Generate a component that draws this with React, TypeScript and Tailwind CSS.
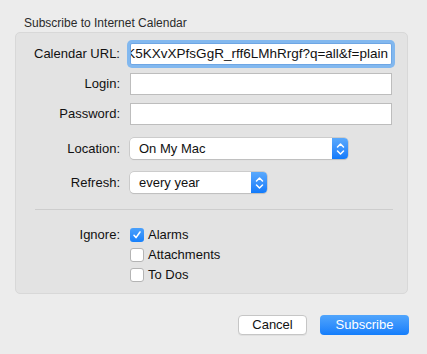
import React from "react";

const font = { fontFamily: '"Liberation Sans", Arial, sans-serif' };

function Stepper() {
  return (
    <svg width="9" height="14" viewBox="0 0 9 14" fill="none">
      <path d="M1.5 5 L4.5 2 L7.5 5" stroke="white" strokeWidth="1.5" strokeLinecap="round" strokeLinejoin="round" />
      <path d="M1.5 9 L4.5 12 L7.5 9" stroke="white" strokeWidth="1.5" strokeLinecap="round" strokeLinejoin="round" />
    </svg>
  );
}

function Popup({ width, text }: { width: string; text: string }) {
  return (
    <div className={`${width} h-[21px] flex rounded-[4px] bg-white shadow-[0_0_0_0.5px_#b5b5b5,0_1px_1px_rgba(0,0,0,0.12)] overflow-hidden`}>
      <div className="flex-1 flex items-center pl-[9px] text-[13px] text-[#111]">{text}</div>
      <div className="w-[16px] h-full flex items-center justify-center bg-gradient-to-b from-[#5aa9fc] to-[#0f7afb]">
        <Stepper />
      </div>
    </div>
  );
}

function Checkbox({ checked, label }: { checked?: boolean; label: string }) {
  return (
    <div className="flex items-center h-[20px]">
      {checked ? (
        <div className="w-[14px] h-[14px] rounded-[3px] bg-gradient-to-b from-[#4aa0fb] to-[#1580fb] flex items-center justify-center">
          <svg width="10" height="10" viewBox="0 0 10 10" fill="none">
            <path d="M2 5.3 L4 7.6 L8 2" stroke="white" strokeWidth="1.6" strokeLinecap="round" strokeLinejoin="round" />
          </svg>
        </div>
      ) : (
        <div className="w-[14px] h-[14px] rounded-[3px] bg-white border border-[#b4b4b4] box-border" />
      )}
      <span className="ml-[4px] text-[13px] text-[#111]">{label}</span>
    </div>
  );
}

function Label({ children }: { children: React.ReactNode }) {
  return <div className="w-[104px] shrink-0 text-right text-[13px] text-[#111]">{children}</div>;
}

export default function App() {
  return (
    <div className="w-[427px] h-[354px] bg-[#ececec] flex flex-col overflow-hidden" style={font}>
      <div className="pt-[16px] pl-[24px] text-[12px] leading-[14px] text-[#2a2a2a]">Subscribe to Internet Calendar</div>
      <div className="mt-[2px] ml-[15px] w-[393px] h-[262px] rounded-[5px] bg-[#e3e3e3] border border-[#d8d8d8] box-border flex flex-col pt-[10px]">
        <div className="flex items-center h-[22px]">
          <Label>Calendar URL:</Label>
          <div className="ml-[10px] w-[262px] h-[22px] bg-white rounded-[2px] border border-[#6ea6e4] shadow-[0_0_0_3px_#82b8ef] flex items-center justify-end overflow-hidden pr-[3px] box-border">
            <span className="whitespace-nowrap text-[13.5px] text-[#111]">K5KXvXPfsGgR_rff6LMhRrgf?q=all&amp;f=plain</span>
          </div>
        </div>
        <div className="flex items-center h-[22px] mt-[8px]">
          <Label>Login:</Label>
          <div className="ml-[10px] w-[262px] h-[22px] bg-white border border-[#bdbdbd] box-border" />
        </div>
        <div className="flex items-center h-[22px] mt-[8px]">
          <Label>Password:</Label>
          <div className="ml-[10px] w-[262px] h-[22px] bg-white border border-[#bdbdbd] box-border" />
        </div>
        <div className="flex items-center h-[21px] mt-[13px]">
          <Label>Location:</Label>
          <div className="ml-[10px]">
            <Popup width="w-[218px]" text="On My Mac" />
          </div>
        </div>
        <div className="flex items-center h-[21px] mt-[13px]">
          <Label>Refresh:</Label>
          <div className="ml-[10px]">
            <Popup width="w-[137px]" text="every year" />
          </div>
        </div>
        <div className="ml-[19px] w-[358px] h-px bg-[#cdcdcd] mt-[16px]" />
        <div className="flex mt-[15px]">
          <div className="w-[104px] shrink-0 h-[20px] flex items-center justify-end text-[13px] text-[#111]">Ignore:</div>
          <div className="ml-[10px] flex flex-col">
            <Checkbox checked label="Alarms" />
            <Checkbox label="Attachments" />
            <Checkbox label="To Dos" />
          </div>
        </div>
      </div>
      <div className="flex justify-end mt-[21px] pr-[18px] gap-[13px]">
        <button className="w-[69px] h-[20px] rounded-[4px] bg-white border border-[#c6c6c6] box-border text-[13px] text-[#111] flex items-center justify-center shadow-[0_1px_0_rgba(0,0,0,0.05)]">Cancel</button>
        <button className="w-[89px] h-[20px] rounded-[4px] bg-gradient-to-b from-[#50a5fc] to-[#127dfb] text-[13px] text-white flex items-center justify-center">Subscribe</button>
      </div>
    </div>
  );
}
